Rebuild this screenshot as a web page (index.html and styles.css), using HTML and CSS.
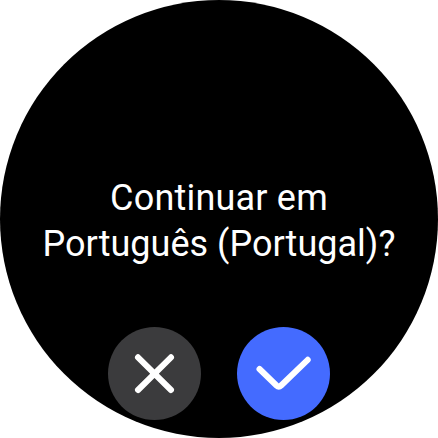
FILE: index.html
```html
<!DOCTYPE html>
<html lang="pt">
<head>
<meta charset="utf-8">
<title>Idioma</title>
<link rel="stylesheet" href="styles.css">
</head>
<body>
<main class="watch">
  <h1 class="message"><span class="line line-first">Continuar em</span><span class="line line-second">Português (Portugal)?</span></h1>
  <div class="actions">
    <button class="action cancel" aria-label="Cancelar">
      <svg class="icon" viewBox="0 0 93 93"><path d="M30 30.300L63 63M63 30.300L30 63"/></svg>
    </button>
    <button class="action confirm" aria-label="Confirmar">
      <svg class="icon" viewBox="0 0 93 93"><path d="M22.500 42L39.500 58.500Q41.800 60.700 44.100 58.500L70.700 32.800"/></svg>
    </button>
  </div>
</main>
</body>
</html>
```

FILE: styles.css
```css
body {
  margin: 0;
  background: #fff;
}

.watch {
  display: flex;
  flex-direction: column;
  align-items: center;
  box-sizing: border-box;
  width: 438px;
  height: 438px;
  padding-top: 175px;
  border-radius: 50%;
  background: #000;
  overflow: hidden;
}

.message {
  display: flex;
  flex-direction: column;
  align-items: center;
  margin: 0;
  color: #fff;
  font: 400 36px/46px Roboto, sans-serif;
  white-space: nowrap;
}

.line-first {
  letter-spacing: 0.2px;
}

.line-second {
  letter-spacing: 0.02px;
}

.actions {
  display: flex;
  gap: 36px;
  margin-top: 60px;
}

.action {
  width: 93px;
  height: 93px;
  padding: 0;
  border: 0;
  border-radius: 50%;
}

.cancel {
  background: #3b3b3d;
}

.confirm {
  background: #446bff;
}

.icon {
  display: block;
  width: 93px;
  height: 93px;
  fill: none;
  stroke: #fff;
  stroke-width: 6;
  stroke-linecap: round;
  stroke-linejoin: round;
}
```
